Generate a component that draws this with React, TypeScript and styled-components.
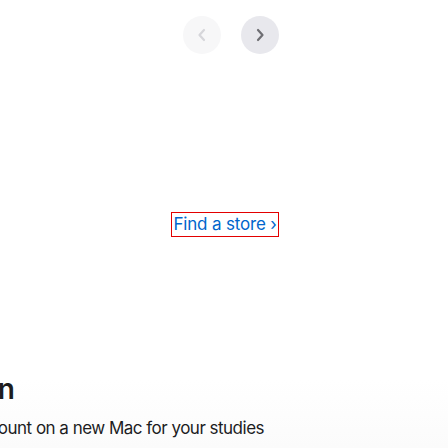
import React from "react";
import styled, { createGlobalStyle } from "styled-components";

const Global = createGlobalStyle`
  html, body { margin: 0; padding: 0; background: #fff; }
  body { font-family: Inter, "Liberation Sans", Arial, sans-serif; overflow: hidden; }
`;

const Page = styled.div`
  width: 448px;
  height: 448px;
  display: flex;
  flex-direction: column;
  overflow: hidden;
  background: linear-gradient(to bottom, #ffffff 0, #ffffff 380px, #fbfbfb 448px);
`;

const Paddles = styled.div`
  display: flex;
  justify-content: center;
  gap: 20px;
  padding: 16px 0 0 14px;
`;

const Paddle = styled.button<{ $disabled?: boolean }>`
  width: 38px;
  height: 38px;
  border-radius: 50%;
  border: none;
  padding: 0;
  display: flex;
  align-items: center;
  justify-content: center;
  background: ${(p) => (p.$disabled ? "#f7f7f8" : "#e8e8ed")};
  color: ${(p) => (p.$disabled ? "#d6d6da" : "#6e6e73")};
`;

const Center = styled.div`
  display: flex;
  justify-content: center;
  padding: 158px 0 0 2px;
`;

const StoreLink = styled.a`
  display: inline-block;
  border: 1px solid #e30000;
  padding: 0 1px 0 1px;
  font-size: 17px;
  line-height: 23px;
  letter-spacing: -0.01em;
  color: #0066cc;
  text-decoration: none;
  white-space: nowrap;
`;

const Bottom = styled.div`
  margin-top: 134px;
  display: flex;
  flex-direction: column;
`;

const Line = styled.div<{ $end: number }>`
  width: ${(p) => p.$end}px;
  display: flex;
  justify-content: flex-end;
  white-space: nowrap;
`;

const Heading = styled.h2`
  margin: 0;
  font-size: 28px;
  line-height: 36px;
  font-weight: 600;
  color: #1d1d1f;
`;

const Copy = styled.p`
  margin: 9px 0 0;
  font-size: 17px;
  line-height: 25px;
  letter-spacing: -0.03em;
  color: #1d1d1f;
`;

const Chevron = ({ dir }: { dir: "left" | "right" }) => (
  <svg width="10" height="16" viewBox="0 0 10 16" aria-hidden="true">
    <path
      d={dir === "right" ? "M3 3 L7.5 8 L3 13" : "M7 3 L2.5 8 L7 13"}
      fill="none"
      stroke="currentColor"
      strokeWidth="2.2"
      strokeLinecap="round"
      strokeLinejoin="round"
    />
  </svg>
);

export default function App() {
  return (
    <>
      <Global />
      <Page>
        <Paddles>
          <Paddle $disabled aria-label="Previous">
            <Chevron dir="left" />
          </Paddle>
          <Paddle aria-label="Next">
            <Chevron dir="right" />
          </Paddle>
        </Paddles>
        <Center>
          <StoreLink href="#">Find a store ›</StoreLink>
        </Center>
        <Bottom>
          <Line $end={15}>
            <Heading>Education</Heading>
          </Line>
          <Line $end={264}>
            <Copy>Get an education discount on a new Mac for your studies</Copy>
          </Line>
        </Bottom>
      </Page>
    </>
  );
}
